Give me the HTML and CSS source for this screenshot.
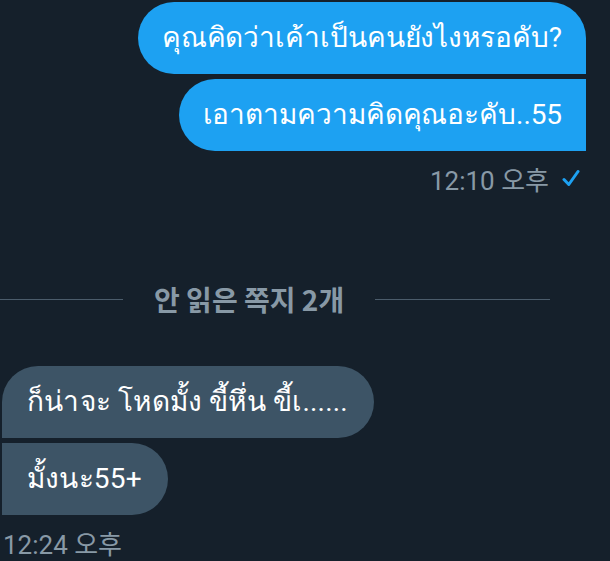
FILE: index.html
```html
<!DOCTYPE html>
<html lang="th">
<head>
<meta charset="utf-8">
<link rel="stylesheet" href="styles.css">
</head>
<body>
<main class="chat">
  <section class="group group-sent">
    <div class="bubble bubble-sent first">คุณคิดว่าเค้าเป็นคนยังไงหรอคับ?</div>
    <div class="bubble bubble-sent">เอาตามความคิดคุณอะคับ..55</div>
    <div class="meta meta-sent">
      <span class="time">12:10 오후</span>
      <svg class="check" viewBox="0 0 18 18" width="18" height="18"><path d="M2 10.5 L6.8 15.5 L16 2.5"/></svg>
    </div>
  </section>

  <div class="divider">
    <span class="line line-left"></span>
    <span class="divider-text">안 읽은 쪽지 2개</span>
    <span class="line line-right"></span>
  </div>

  <section class="group group-received">
    <div class="bubble bubble-received first">ก็น่าจะ โหดมั้ง ขี้หึ่น ขี้เ......</div>
    <div class="bubble bubble-received">มั้งนะ55+</div>
    <div class="meta meta-received">
      <span class="time">12:24 오후</span>
    </div>
  </section>
</main>
</body>
</html>
```

FILE: styles.css
```css
html, body {
  margin: 0;
  padding: 0;
  background: #15202b;
}

body {
  width: 610px;
  height: 561px;
  overflow: hidden;
  font-family: Roboto, "Noto Sans", "DejaVu Sans", "Noto Sans CJK KR", sans-serif;
  color: #ffffff;
}

.chat {
  display: flex;
  flex-direction: column;
}

.group {
  display: flex;
  flex-direction: column;
  gap: 5px;
}

.group-sent {
  align-items: flex-end;
  padding-top: 2px;
  padding-right: 24px;
}

.group-received {
  align-items: flex-start;
  padding-left: 2px;
  margin-top: 47px;
}

.bubble {
  box-sizing: border-box;
  height: 72px;
  line-height: 72px;
  padding: 0 24px;
  font-size: 28px;
  white-space: nowrap;
  border-radius: 36px;
}

.bubble-sent {
  background: #1da1f2;
  letter-spacing: -0.08px;
  border-top-right-radius: 0;
  border-bottom-right-radius: 0;
}

.bubble-sent.first {
  border-top-right-radius: 36px;
}

.bubble-received {
  background: #3d5466;
  padding: 0 26px 0 25px;
  letter-spacing: 0.2px;
  border-top-left-radius: 0;
  border-bottom-left-radius: 0;
}

.bubble-received.first {
  border-top-left-radius: 36px;
}

.meta {
  display: flex;
  align-items: center;
  gap: 13px;
  height: 30px;
  font-size: 26px;
  color: #8899a6;
}

.meta-sent {
  margin-top: 7px;
  margin-right: 6px;
}

.meta-received {
  margin-top: 7px;
  margin-left: 1px;
}

.check {
  display: block;
  fill: none;
  stroke: #1da1f2;
  stroke-width: 3;
  stroke-linecap: round;
  stroke-linejoin: round;
}

.divider {
  display: grid;
  grid-template-columns: 123px auto 1fr;
  align-items: center;
  column-gap: 31px;
  width: 550px;
  height: 40px;
  margin-top: 86px;
}

.line {
  height: 1px;
  background: #4b5c6b;
}

.divider-text {
  font-family: "Noto Sans CJK KR", Roboto, sans-serif;
  font-weight: 700;
  font-size: 28px;
  color: #8899a6;
  line-height: 40px;
}
```
